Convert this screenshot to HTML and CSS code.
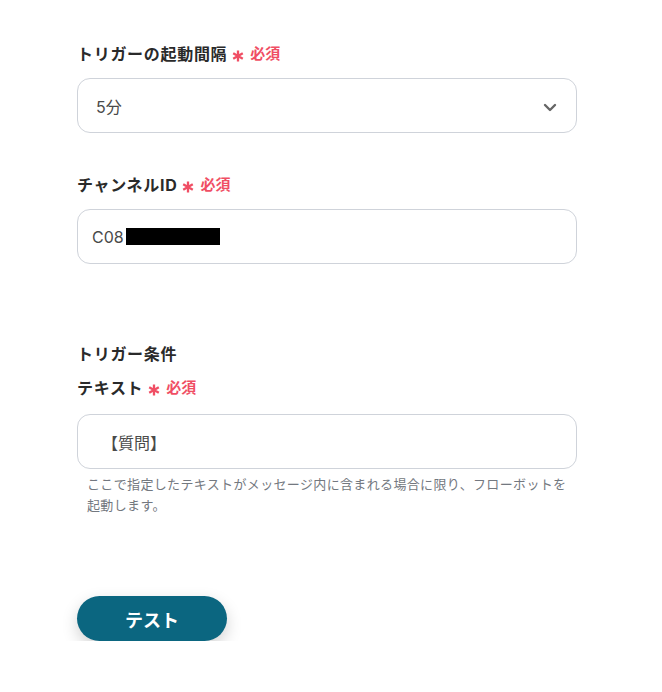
FILE: index.html
```html
<!DOCTYPE html>
<html lang="ja">
<head>
<meta charset="utf-8">
<link rel="stylesheet" href="styles.css">
</head>
<body>
<div class="form">
  <div class="field">
    <div class="label">トリガーの起動間隔<span class="req"><svg class="ast" width="12" height="12" viewBox="0 0 12 12"><path d="M6 0.5V11.5M1.2 3.25L10.8 8.75M1.2 8.75L10.8 3.25" stroke="#f04e64" stroke-width="2.3"/></svg>必須</span></div>
    <div class="box select">
      <span class="val">5分</span>
      <svg class="chev" width="14" height="9" viewBox="0 0 14 9"><path d="M2 2 L7 7 L12 2" fill="none" stroke="#666" stroke-width="2.4" stroke-linecap="round" stroke-linejoin="round"/></svg>
    </div>
  </div>
  <div class="field f2">
    <div class="label">チャンネルID<span class="req"><svg class="ast" width="12" height="12" viewBox="0 0 12 12"><path d="M6 0.5V11.5M1.2 3.25L10.8 8.75M1.2 8.75L10.8 3.25" stroke="#f04e64" stroke-width="2.3"/></svg>必須</span></div>
    <div class="box input"><span class="val">C08</span><span class="redact"></span></div>
  </div>
  <div class="section">トリガー条件</div>
  <div class="field f3">
    <div class="label">テキスト<span class="req"><svg class="ast" width="12" height="12" viewBox="0 0 12 12"><path d="M6 0.5V11.5M1.2 3.25L10.8 8.75M1.2 8.75L10.8 3.25" stroke="#f04e64" stroke-width="2.3"/></svg>必須</span></div>
    <div class="box input b3"><span class="val q">【質問】</span></div>
    <p class="help">ここで指定したテキストがメッセージ内に含まれる場合に限り、フローボットを起動します。</p>
  </div>
  <button class="btn">テスト</button>
</div>
</body>
</html>
```
FILE: styles.css
```css
* { box-sizing: border-box; }
body {
  margin: 0;
  background: #fff;
  font-family: "Inter", "Noto Sans CJK JP", sans-serif;
  color: #2b2b2b;
}
.form {
  width: 500px;
  margin-left: 77px;
  padding-top: 42px;
  display: flex;
  flex-direction: column;
}
.label {
  font-size: 16px;
  font-weight: 700;
  line-height: 24px;
  letter-spacing: 0.7px;
  display: flex;
  align-items: center;
  color: #2a2a2a;
}
.req {
  color: #f04e64;
  font-size: 15px;
  font-weight: 700;
  letter-spacing: 0;
  margin-left: 5px;
  display: flex;
  align-items: center;
}
.ast {
  margin-right: 6px;
  margin-top: 4px;
}
.box {
  margin-top: 12px;
  height: 55px;
  border: 1px solid #cfd3da;
  border-radius: 13px;
  display: flex;
  align-items: center;
  font-size: 16px;
  color: #4a4a4a;
}
.select {
  padding: 0 19px 0 18px;
  justify-content: space-between;
}
.chev { margin-top: 3px; }
.input { padding: 0 14px; }
.redact {
  display: inline-block;
  width: 94px;
  height: 17px;
  background: #000;
  margin-left: 2px;
}
.q { margin-left: 10px; }
.f2 { margin-top: 40px; }
.section {
  margin-top: 78px;
  font-size: 16px;
  font-weight: 700;
  line-height: 24px;
  letter-spacing: 0.7px;
  color: #2a2a2a;
}
.f3 { margin-top: 10px; }
.b3 { margin-top: 14px; }
.help {
  margin: 5px 10px 0 10px;
  font-size: 13px;
  line-height: 21px;
  letter-spacing: 0.35px;
  color: #737880;
}
.btn {
  margin-top: 80px;
  width: 150px;
  height: 45px;
  border: none;
  border-radius: 23px;
  background: #0b6680;
  color: #fff;
  font-family: "Inter", "Noto Sans CJK JP", sans-serif;
  font-size: 18px;
  font-weight: 700;
  box-shadow: 0 6px 16px rgba(0, 0, 0, 0.18);
}
```
